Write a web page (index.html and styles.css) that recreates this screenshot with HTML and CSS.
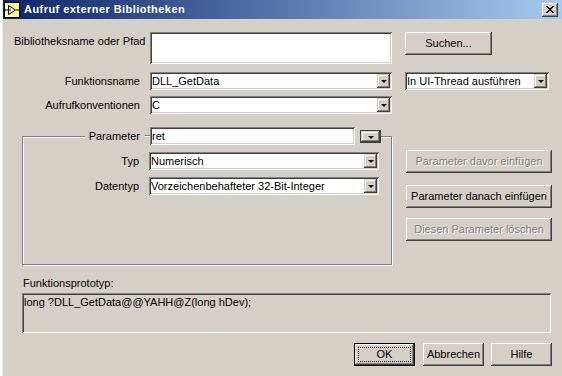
FILE: index.html
```html
<!DOCTYPE html>
<html lang="de">
<head>
  <meta charset="UTF-8">
  <title>Aufruf externer Bibliotheken</title>
  <link rel="stylesheet" href="styles.css">
</head>
<body>

  <div class="window">
    <div class="titlebar">
      <svg class="app-icon" width="16" height="16" viewBox="0 0 16 16">
        <rect x="0.5" y="0.5" width="15" height="15" fill="#ffff80" stroke="#000"/>
        <path d="M1 8h3M12 8h3" stroke="#000"/>
        <polygon points="4.5,3.5 11.5,8 4.5,12.5" fill="#fff" stroke="#000"/>
        <path d="M6 6.5v3" stroke="#7a4fa0" stroke-width="1.5"/>
      </svg>
      <span class="title">Aufruf externer Bibliotheken</span>
      <span class="close">
        <svg width="8" height="7" viewBox="0 0 8 7">
          <path d="M0 0l7 7M1 0l7 7M7 0l-7 7M8 0l-7 7" stroke="#000" stroke-width="1"/>
        </svg>
      </span>
    </div>

    <div class="content">
      <div class="row row-lib">
        <label class="lbl lbl-left">Bibliotheksname oder Pfad</label>
        <div class="textbox tall"></div>
        <button class="btn btn-search">Suchen...</button>
      </div>

      <div class="row row-func">
        <label class="lbl">Funktionsname</label>
        <div class="combo w-main"><span class="val">DLL_GetData</span><span class="drop"></span></div>
        <div class="combo w-thread"><span class="val">In UI-Thread ausführen</span><span class="drop"></span></div>
      </div>

      <div class="row row-conv">
        <label class="lbl">Aufrufkonventionen</label>
        <div class="combo w-main"><span class="val">C</span><span class="drop"></span></div>
      </div>

      <div class="param-area">
        <fieldset class="group">
          <legend class="group-head">
            <span class="group-lbl">Parameter</span>
            <span class="tick"></span>
            <div class="textbox param-name"><span class="val">ret</span></div>
            <span class="drop-ext"><span class="drop"></span></span>
          </legend>
          <div class="group-body">
            <div class="row">
              <label class="lbl lbl-group">Typ</label>
              <div class="combo w-group"><span class="val">Numerisch</span><span class="drop"></span></div>
            </div>
            <div class="row">
              <label class="lbl lbl-group">Datentyp</label>
              <div class="combo w-group"><span class="val">Vorzeichenbehafteter 32-Bit-Integer</span><span class="drop"></span></div>
            </div>
          </div>
        </fieldset>

        <div class="side-btns">
          <button class="btn btn-side disabled">Parameter davor einfügen</button>
          <button class="btn btn-side second">Parameter danach einfügen</button>
          <button class="btn btn-side third disabled">Diesen Parameter löschen</button>
        </div>
      </div>

      <div class="proto-lbl">Funktionsprototyp:</div>
      <div class="proto-box">long ?DLL_GetData@@YAHH@Z(long hDev);</div>

      <div class="actions">
        <button class="btn btn-act default">OK</button>
        <button class="btn btn-act">Abbrechen</button>
        <button class="btn btn-act last">Hilfe</button>
      </div>
    </div>
  </div>

</body>
</html>
```

FILE: styles.css
```css
body {
  margin: 0;
  background-color: #fff;
  font-family: "Liberation Sans", Arial, sans-serif;
  font-size: 11px;
  line-height: 13px;
  color: #000;
  overflow: hidden;
}

.window {
  margin-left: 2px;
  height: 376px;
  background-color: #d4d0c8;
  border-left: 1px solid #ececec;
}

/* title bar */
.titlebar {
  height: 19px;
  display: flex;
  align-items: center;
  padding-left: 1px;
  background: linear-gradient(to right, #0a246a, #a6caf0);
  color: #fff;
}

.app-icon {
  flex: none;
}

.title {
  margin-left: 4px;
  font-weight: bold;
  letter-spacing: 0.45px;
}

.close {
  margin-left: auto;
  margin-right: 4px;
  width: 16px;
  height: 14px;
  display: flex;
  align-items: center;
  justify-content: center;
  background-color: #d4d0c8;
  box-shadow: inset -1px -1px #404040, inset 1px 1px #fff, inset -2px -2px #808080;
}

/* common controls */
.row {
  display: flex;
  align-items: center;
}

.lbl {
  flex: none;
  width: 147px;
  box-sizing: border-box;
  padding-right: 10px;
  text-align: right;
  white-space: nowrap;
}

.textbox, .combo {
  box-sizing: border-box;
  background-color: #fff;
  box-shadow: inset 1px 1px #808080, inset -1px -1px #fff, inset 2px 2px #404040, inset -2px -2px #d4d0c8;
}

.combo {
  display: flex;
  align-items: center;
  height: 18px;
  padding: 2px;
}

.val {
  flex: 1;
  white-space: nowrap;
  overflow: hidden;
}

.drop {
  flex: none;
  width: 13px;
  height: 14px;
  box-sizing: border-box;
  display: flex;
  align-items: center;
  justify-content: center;
  background-color: #d4d0c8;
  box-shadow: inset -1px -1px #404040, inset 1px 1px #d4d0c8, inset -2px -2px #808080, inset 2px 2px #fff;
}

.drop::after {
  content: "";
  margin-top: 1px;
  border-top: 3px solid #000;
  border-left: 3px solid transparent;
  border-right: 3px solid transparent;
}

.btn {
  font: inherit;
  color: #000;
  background-color: #d4d0c8;
  border: none;
  padding: 0;
  height: 23px;
  box-shadow: inset -1px -1px #404040, inset 1px 1px #fff, inset -2px -2px #808080, inset 2px 2px #d4d0c8;
}

.btn.disabled {
  color: #808080;
  text-shadow: 1px 1px #fff;
}

/* first rows */
.row-lib {
  align-items: flex-start;
  margin-top: 13px;
}

.lbl-left {
  text-align: left;
  padding-left: 11px;
  padding-top: 3px;
}

.textbox.tall {
  width: 242px;
  height: 32px;
}

.btn-search {
  margin-left: 13px;
  width: 87px;
}

.row-func {
  margin-top: 8px;
}

.row-conv {
  margin-top: 6px;
}

.w-main {
  width: 242px;
}

.w-thread {
  margin-left: 13px;
  width: 144px;
}

/* parameter group */
.param-area {
  display: flex;
  align-items: flex-start;
  margin-top: 13px;
}

.group {
  margin: 0 0 0 19px;
  padding: 0;
  width: 370px;
  box-sizing: border-box;
  border: 1px solid #808080;
  box-shadow: 1px 1px 0 #fff, inset 1px 1px 0 #fff;
}

.group-head {
  display: flex;
  align-items: flex-start;
  margin-left: 62px;
  padding: 0;
  height: 18px;
  background-color: #d4d0c8;
}

.group-lbl {
  width: 60px;
  box-sizing: border-box;
  padding-right: 5px;
  padding-top: 3px;
  text-align: right;
}

.tick {
  width: 5px;
  margin-top: 8px;
  border-top: 1px solid #808080;
  border-bottom: 1px solid #fff;
}

.param-name {
  display: flex;
  align-items: center;
  width: 205px;
  height: 18px;
  padding: 2px;
}

.drop-ext {
  margin-left: 5px;
  margin-top: 3px;
  width: 21px;
  height: 13px;
  box-sizing: border-box;
  display: flex;
  border: 1px solid #404040;
}

.drop-ext .drop {
  width: 19px;
  height: 11px;
}

.group-body {
  display: flex;
  flex-direction: column;
  gap: 7px;
  height: 119px;
  box-sizing: border-box;
  padding-top: 7px;
}

.lbl-group {
  width: 126px;
}

.w-group {
  width: 230px;
}

.side-btns {
  display: flex;
  flex-direction: column;
  margin-left: 14px;
  margin-top: 23px;
}

.btn-side {
  width: 146px;
}

.btn-side.second {
  margin-top: 12px;
}

.btn-side.third {
  margin-top: 10px;
}

/* prototype */
.proto-lbl {
  margin-top: 12px;
  margin-left: 20px;
}

.proto-box {
  margin-top: 3px;
  margin-left: 19px;
  width: 529px;
  height: 40px;
  box-sizing: border-box;
  padding: 3px 2px;
  box-shadow: inset 1px 1px #808080, inset -1px -1px #fff, inset 2px 2px #404040, inset -2px -2px #d4d0c8;
}

/* dialog buttons */
.actions {
  display: flex;
  margin-top: 10px;
  padding-left: 351px;
}

.btn-act {
  width: 61px;
  margin-right: 8px;
}

.btn-act.last {
  margin-left: -1px;
}

.btn-act.default {
  box-shadow: inset 0 0 0 1px #000, inset -2px -2px #404040, inset 2px 2px #fff, inset -3px -3px #808080;
  outline: 1px dotted #000;
  outline-offset: -5px;
}
```
